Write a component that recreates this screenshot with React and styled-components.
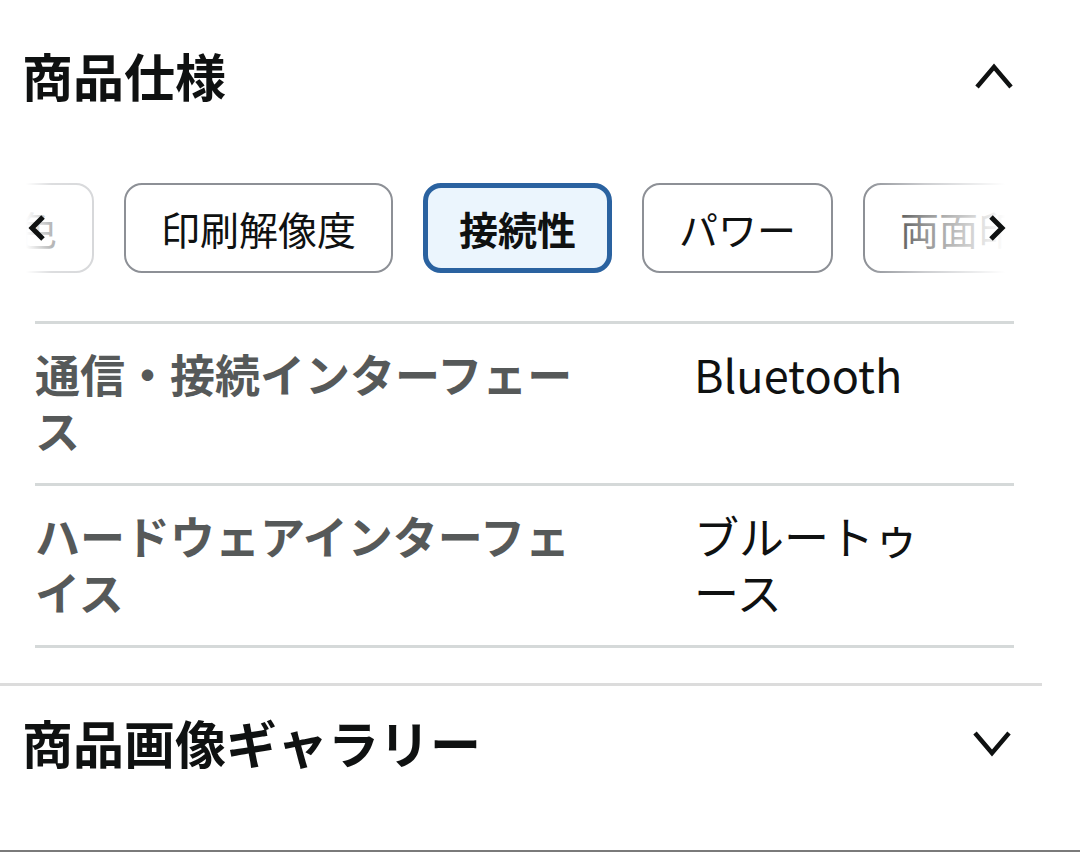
import React from 'react';
import styled, { createGlobalStyle } from 'styled-components';

const GlobalStyle = createGlobalStyle`
  body {
    margin: 0;
    background: #fff;
    font-family: "Noto Sans CJK JP", "Noto Sans", sans-serif;
    color: #0f1111;
  }
`;

const chips = [
  { label: '印刷色' },
  { label: '印刷解像度' },
  { label: '接続性', active: true },
  { label: 'パワー' },
  { label: '両面印刷' },
];

const specs = [
  { name: '通信・接続インターフェース', value: 'Bluetooth' },
  { name: 'ハードウェアインターフェイス', value: 'ブルートゥース' },
];

const Chevron = ({ up }) => (
  <svg width="40" height="30" viewBox="0 0 40 30">
    <polyline
      points={up ? '3,26 20,6 37,26' : '3,5 20,25 37,5'}
      fill="none"
      stroke="#0f1111"
      strokeWidth="4.5"
      strokeLinejoin="miter"
    />
  </svg>
);

const Arrow = ({ left }) => (
  <svg width="22" height="30" viewBox="0 0 22 30">
    <polyline
      points={left ? '17,4 6,15 17,26' : '5,4 16,15 5,26'}
      fill="none"
      stroke="#0f1111"
      strokeWidth="5"
    />
  </svg>
);

const App = () => {
  return (
    <Page>
      <GlobalStyle />
      <Section>
        <Header>
          <Title>商品仕様</Title>
          <Chevron up />
        </Header>
        <ChipBar>
          <Track>
            {chips.map((c) => (
              <Chip key={c.label} active={c.active}>
                {c.label}
              </Chip>
            ))}
          </Track>
          <Fade side="left">
            <Arrow left />
          </Fade>
          <Fade side="right">
            <Arrow />
          </Fade>
        </ChipBar>
        <Table>
          {specs.map((s) => (
            <Row key={s.name}>
              <Name>{s.name}</Name>
              <Value>{s.value}</Value>
            </Row>
          ))}
        </Table>
      </Section>
      <Collapsed>
        <Header>
          <Title>商品画像ギャラリー</Title>
          <Chevron />
        </Header>
      </Collapsed>
    </Page>
  );
};

const Page = styled.div`
  width: 1080px;
  height: 852px;
  box-sizing: border-box;
  border-bottom: 2px solid #7a7a7a;
  overflow: hidden;
`;

const Section = styled.section`
  width: 1042px;
  box-sizing: border-box;
  padding: 0 28px 35px 22px;
`;

const Header = styled.div`
  display: flex;
  align-items: center;
  justify-content: space-between;
  height: 150px;
  svg {
    margin-top: 2px;
  }
`;

const Title = styled.h2`
  margin: 0;
  font-size: 51px;
  font-weight: 700;
  letter-spacing: 0;
  color: #0f1111;
`;

const ChipBar = styled.div`
  position: relative;
  margin-top: 33px;
  height: 90px;
  overflow: hidden;
`;

const Track = styled.div`
  display: flex;
  gap: 30px;
  margin-left: -119px;
`;

const Chip = styled.div`
  flex: none;
  display: flex;
  align-items: center;
  height: 90px;
  box-sizing: border-box;
  padding: 0 ${(p) => (p.active ? '31px' : '35px')};
  border: ${(p) => (p.active ? '5px solid #2a62a0' : '2px solid #8d9096')};
  border-radius: 18px;
  background: ${(p) => (p.active ? '#ebf5fd' : '#fff')};
  font-size: 39px;
  font-weight: ${(p) => (p.active ? 700 : 400)};
  color: #0f1111;
  white-space: nowrap;
`;

const Fade = styled.div`
  position: absolute;
  top: 0;
  bottom: 0;
  ${(p) => (p.side === 'left' ? 'left: 0;' : 'right: 0;')}
  width: ${(p) => (p.side === 'left' ? '98px' : '150px')};
  display: flex;
  align-items: center;
  justify-content: ${(p) => (p.side === 'left' ? 'flex-start' : 'flex-end')};
  padding: ${(p) => (p.side === 'left' ? '0 0 0 4px' : '0 6px 0 0')};
  box-sizing: border-box;
  background: ${(p) =>
    p.side === 'left'
      ? 'linear-gradient(to right, #fff 4%, rgba(255, 255, 255, 0.7) 30%, rgba(255, 255, 255, 0.62))'
      : 'linear-gradient(to left, #fff 6%, rgba(255, 255, 255, 0.55) 60%, rgba(255, 255, 255, 0))'};
`;

const Table = styled.div`
  margin: 48px 0 0 13px;
  border-top: 3px solid #d5d9d9;
`;

const Row = styled.div`
  display: grid;
  grid-template-columns: 580px 240px;
  column-gap: 79px;
  padding: 22px 0 25px;
  border-bottom: 3px solid #d5d9d9;
  font-size: 45px;
  line-height: 56px;
`;

const Name = styled.div`
  font-weight: 700;
  color: #565959;
`;

const Value = styled.div`
  font-weight: 400;
  color: #0f1111;
`;

const Collapsed = styled.section`
  width: 1042px;
  box-sizing: border-box;
  padding: 0 30px 0 22px;
  border-top: 3px solid #dcdcdc;
  ${Header} {
    height: 112px;
  }
`;

export default App;
